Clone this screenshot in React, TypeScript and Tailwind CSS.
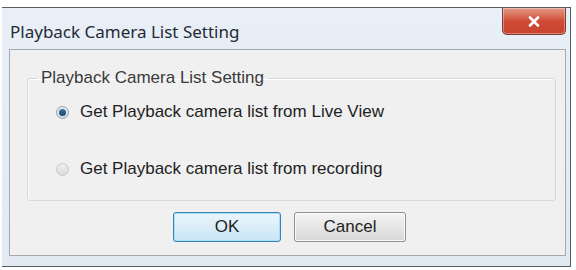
import React from 'react';

function Radio({ checked }: { checked: boolean }) {
  return (
    <span
      className={
        'flex h-[13px] w-[13px] shrink-0 items-center justify-center rounded-full border ' +
        (checked
          ? 'border-[#8aa0b4] bg-gradient-to-b from-[#e8eef3] to-[#d3dde6]'
          : 'border-[#c4c8cc] bg-gradient-to-b from-[#eeeeee] to-[#dcdcdc]')
      }
    >
      {checked && (
        <span className="h-[7px] w-[7px] rounded-full bg-gradient-to-b from-[#3f6f95] to-[#1d4a70]" />
      )}
    </span>
  );
}

export default function App() {
  const font = { fontFamily: '"Liberation Sans", Arial, sans-serif' };

  return (
    <div className="h-[270px] w-[576px] bg-white pt-[7px] pl-[2px]">
      {/* window frame */}
      <div className="flex h-[260px] w-[569px] flex-col border-t border-r border-b border-[#555c63] bg-gradient-to-b from-[#e9eff6] to-[#e1e9f2] pl-[7px] pr-[4px] pb-[10px]">
        {/* title bar */}
        <div className="flex h-[41px] items-start justify-between">
          <span
            className="mt-[13px] ml-[1px] text-[17px] leading-[21px] text-[#1e2a36]"
            style={{ fontFamily: '"Noto Sans", "Open Sans", sans-serif' }}
          >
            Playback Camera List Setting
          </span>
          <div className="flex h-[27px] w-[64px] items-center justify-center rounded-b-[5px] border border-t-0 border-[#7a3b33] bg-gradient-to-b from-[#e49a88] via-[#cf4a34] to-[#c9442e] shadow-[inset_0_0_0_1px_rgba(255,255,255,0.35)]">
            <svg width="12" height="11" viewBox="0 0 12 11">
              <path d="M2 1.5 L10 9.5 M10 1.5 L2 9.5" stroke="#ffffff" strokeWidth="2.6" strokeLinecap="round" />
            </svg>
          </div>
        </div>

        {/* client area */}
        <div className="flex flex-1 flex-col border border-[#a3a9b0] bg-[#f0f0f0] pt-[18px] pl-[17px] pr-[9px]" style={font}>
          <fieldset className="h-[133px] rounded-[3px] border border-[#d4d8dc] shadow-[inset_1px_1px_0_#ffffff]">
            <legend className="ml-[9px] px-[4px] text-[17px] leading-[20px] text-[#3a3a3a]">
              Playback Camera List Setting
            </legend>
            <div className="flex flex-col gap-[37px] pt-[14px] pl-[28px]">
              <label className="flex items-center gap-[11px] text-[17px] leading-[20px] text-[#222222]">
                <Radio checked />
                Get Playback camera list from Live View
              </label>
              <label className="flex items-center gap-[11px] text-[17px] leading-[20px] text-[#222222]">
                <Radio checked={false} />
                Get Playback camera list from recording
              </label>
            </div>
          </fieldset>

          <div className="mt-[11px] flex justify-center gap-[13px] pr-[4px]">
            <button className="h-[30px] w-[108px] rounded-[3px] border border-[#3c7fb1] bg-gradient-to-b from-[#eaf6fd] to-[#c9e5f5] text-[17px] text-[#222222] shadow-[inset_0_0_0_1px_#a6e0f7]">
              OK
            </button>
            <button className="h-[30px] w-[112px] rounded-[3px] border border-[#8e8f8f] bg-gradient-to-b from-[#f4f4f4] via-[#e6e6e6] to-[#d7d7d7] text-[17px] text-[#222222] shadow-[inset_0_0_0_1px_#fbfbfb]">
              Cancel
            </button>
          </div>
        </div>
      </div>
    </div>
  );
}
